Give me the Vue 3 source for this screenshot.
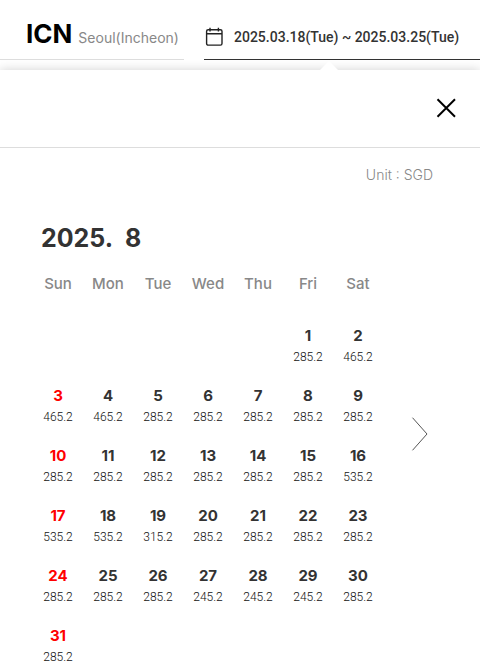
<script setup>
const weekdays = ['Sun', 'Mon', 'Tue', 'Wed', 'Thu', 'Fri', 'Sat']
const firstWeekday = 5
const fares = [
  '285.2', '465.2',
  '465.2', '465.2', '285.2', '285.2', '285.2', '285.2', '285.2',
  '285.2', '285.2', '285.2', '285.2', '285.2', '285.2', '535.2',
  '535.2', '535.2', '315.2', '285.2', '285.2', '285.2', '285.2',
  '285.2', '285.2', '285.2', '245.2', '245.2', '245.2', '285.2',
  '285.2',
]
const cells = [
  ...Array(firstWeekday).fill(null),
  ...fares.map((fare, i) => ({ day: i + 1, fare })),
]
const weeks = []
for (let i = 0; i < cells.length; i += 7) {
  const week = cells.slice(i, i + 7)
  while (week.length < 7) week.push(null)
  weeks.push(week)
}
</script>

<template>
  <div class="page">
    <header class="search">
      <button class="airport" type="button">
        <strong class="code">ICN</strong>
        <span class="city">Seoul(Incheon)</span>
      </button>
      <button class="dates" type="button">
        <svg class="calendar-icon" width="18" height="20" viewBox="0 0 18 20" fill="none" stroke="#222" stroke-width="1.4" aria-hidden="true">
          <rect x="1.6" y="2.7" width="15.4" height="15.4" rx="1.6" />
          <path d="M1.6 6.7H17M5 0.8V4.6M13.4 0.8V4.6" />
        </svg>
        <span>2025.03.18(Tue) ~ 2025.03.25(Tue)</span>
        <span class="pointer"></span>
      </button>
    </header>

    <main class="panel">
      <div class="panel-head">
        <button class="close" type="button" aria-label="Close">
          <svg width="20" height="20" viewBox="0 0 20 20" fill="none" stroke="#000" stroke-width="2" aria-hidden="true">
            <path d="M1.5 1.3L19 18.7M19 1.3L1.5 18.7" />
          </svg>
        </button>
      </div>
      <p class="unit">Unit : SGD</p>
      <h2 class="month">2025.&nbsp; 8</h2>
      <div class="calendar">
        <div class="grid">
          <table>
            <thead>
              <tr>
                <th v-for="name in weekdays" :key="name" scope="col">{{ name }}</th>
              </tr>
            </thead>
            <tbody>
              <tr v-for="(week, w) in weeks" :key="w">
                <td v-for="(cell, d) in week" :key="d">
                  <button v-if="cell" class="day" :class="{ sunday: d === 0 }" type="button">
                    <span class="number">{{ cell.day }}</span>
                    <span class="fare">{{ cell.fare }}</span>
                  </button>
                </td>
              </tr>
            </tbody>
          </table>
        </div>
        <button class="next" type="button" aria-label="Next month">
          <svg width="18" height="34" viewBox="0 0 18 34" fill="none" stroke="#555" stroke-width="1" aria-hidden="true">
            <path d="M1.5 0.7L16 17L1.5 33.3" />
          </svg>
        </button>
      </div>
    </main>
  </div>
</template>

<style>
body {
  margin: 0;
  background: #fff;
}
</style>

<style scoped>
.page {
  font-family: Inter, "Liberation Sans", sans-serif;
  color: #333;
}
button {
  margin: 0;
  padding: 0;
  border: 0;
  background: none;
  font: inherit;
  color: inherit;
  cursor: pointer;
}
.search {
  display: flex;
  gap: 20px;
  height: 60px;
  margin-bottom: 10px;
}
.airport,
.dates {
  box-sizing: border-box;
  display: flex;
  align-items: center;
  white-space: nowrap;
  padding-top: 14px;
}
.airport {
  flex: 0 0 184px;
  align-items: baseline;
  gap: 6px;
  padding-left: 26px;
  padding-top: 18px;
  border-bottom: 1px solid #ddd;
}
.code {
  font-size: 26px;
  line-height: 32px;
  font-weight: 700;
  color: #000;
}
.city {
  font-size: 14px;
  color: #888;
}
.dates {
  position: relative;
  flex: 1;
  gap: 11px;
  padding-left: 1px;
  border-bottom: 1px solid #333;
  font-family: Roboto, "Liberation Sans", sans-serif;
  font-size: 14px;
  font-weight: 500;
}
.calendar-icon {
  flex: none;
}
.pointer {
  position: absolute;
  z-index: 1;
  top: 61px;
  left: 116px;
  width: 18px;
  height: 9px;
  background: #fff;
  clip-path: polygon(50% 0, 100% 100%, 0 100%);
}
.panel {
  background: #fff;
  box-shadow: 0 0 10px rgba(0, 0, 0, 0.18);
}
.panel-head {
  box-sizing: border-box;
  display: flex;
  align-items: center;
  justify-content: flex-end;
  height: 78px;
  padding: 0 24px 2px 0;
  border-bottom: 1px solid #ddd;
}
.close {
  display: flex;
}
.unit {
  margin: 0;
  padding: 17px 47px 0 0;
  font-size: 14px;
  line-height: 20px;
  font-weight: 300;
  text-align: right;
  color: #888;
}
.month {
  margin: 0;
  padding: 37px 0 0 41px;
  font-size: 25px;
  line-height: 32px;
  font-weight: 700;
}
.calendar {
  display: flex;
  align-items: flex-start;
  padding: 10px 23px 0 33px;
}
.grid {
  flex: 1;
  min-width: 0;
}
table {
  width: 100%;
  table-layout: fixed;
  border-collapse: collapse;
}
th,
td {
  padding: 0;
  text-align: center;
}
th {
  height: 46px;
  padding-bottom: 6px;
  box-sizing: border-box;
  font-size: 15px;
  line-height: 20px;
  font-weight: 500;
  color: #888;
}
td {
  height: 60px;
  vertical-align: bottom;
}
.day {
  width: 100%;
  height: 60px;
  padding: 16px 0 2px;
  display: flex;
  flex-direction: column;
  align-items: center;
}
.number {
  font-size: 15px;
  line-height: 20px;
  font-weight: 700;
}
.sunday .number {
  color: #f00;
}
.fare {
  font-family: Roboto, "Liberation Sans", sans-serif;
  font-size: 12px;
  line-height: 22px;
  font-weight: 300;
  color: #111;
}
.next {
  display: flex;
  justify-content: center;
  flex: 0 0 74px;
  padding: 153px 0;
}
</style>
